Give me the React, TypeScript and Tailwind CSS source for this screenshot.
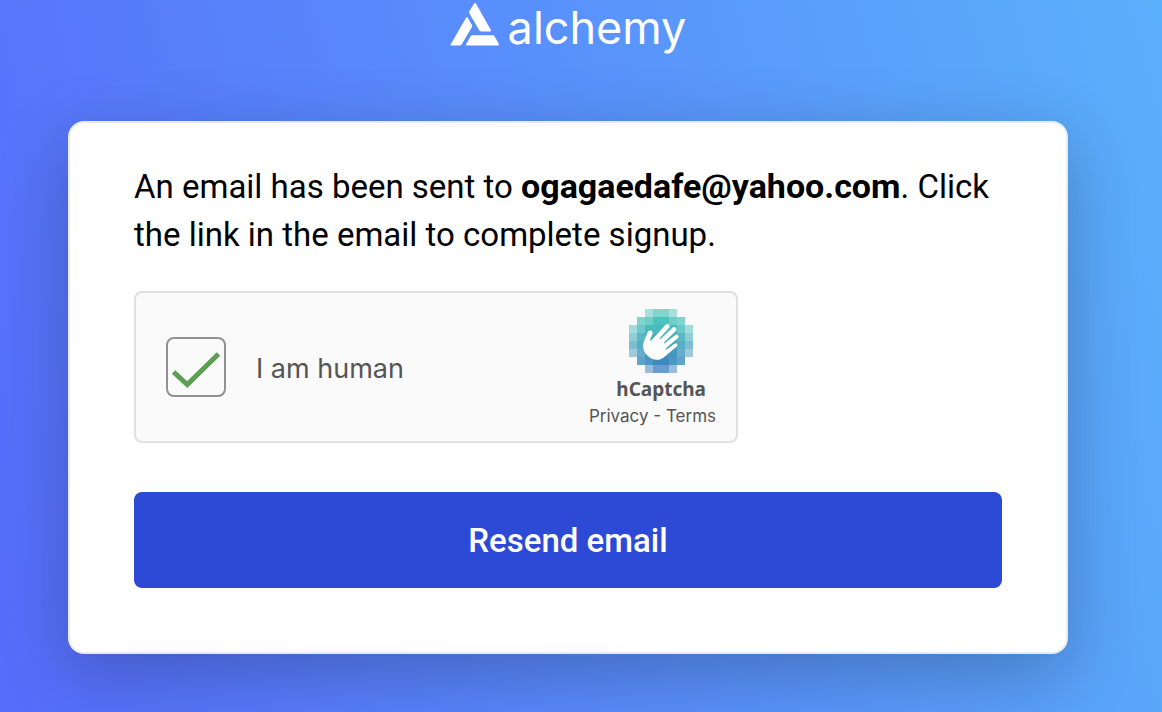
const PIXEL_ROWS = [
  { color: '#4cc8bb', alphas: [0, 0, 0.5, 0.7, 0.7, 0.5, 0, 0] },
  { color: '#4cc3bb', alphas: [0, 0.7, 0.8, 1, 1, 0.8, 0.7, 0] },
  { color: '#4abbbc', alphas: [0.5, 0.8, 1, 1, 1, 1, 0.8, 0.5] },
  { color: '#48b0bc', alphas: [0.6, 0.9, 1, 1, 1, 1, 0.9, 0.6] },
  { color: '#46a5bd', alphas: [0.7, 0.9, 1, 1, 1, 1, 0.9, 0.7] },
  { color: '#4299be', alphas: [0.5, 0.8, 1, 1, 1, 1, 0.8, 0.5] },
  { color: '#3d8bbe', alphas: [0, 0.8, 0.9, 1, 1, 0.9, 0.8, 0] },
  { color: '#3a7cc0', alphas: [0, 0, 0.5, 0.75, 0.75, 0.5, 0, 0] },
];

function AlchemyMark() {
  return (
    <svg viewBox="0 0 50 44" className="h-11 w-[50px]" fill="#fff" aria-hidden="true">
      <path d="M24.1 1.6 Q25 0.2 25.9 1.6 L41 28.2 Q41.3 29.4 40 29.4 L31 29.4 Q30 29.4 29.4 28.4 L19.2 11 Q18.8 10.2 19.2 9.4 Z" />
      <path d="M16.2 15.4 Q17 14.6 17.6 15.4 L22 23 Q22.4 24 22 25 L11.6 42.6 Q11.1 43.4 10.2 43.4 L1 43.4 Q0.2 43.2 0.6 42.4 Z" />
      <path d="M20.8 34 Q21.3 33.2 22.2 33.2 L42.8 33.2 Q43.8 33.2 44.3 34 L48.9 42 Q49.3 43.4 48.2 43.4 L17 43.4 Q15.6 43.4 16.1 42.2 Z" />
    </svg>
  );
}

function CaptchaMark() {
  return (
    <svg viewBox="0 0 32 32" className="size-16" shapeRendering="crispEdges" aria-hidden="true">
      {PIXEL_ROWS.map((row, y) =>
        row.alphas.map((alpha, x) =>
          alpha > 0 ? (
            <rect key={`${x}-${y}`} x={x * 4} y={y * 4} width="4" height="4" fill={row.color} fillOpacity={alpha} />
          ) : null,
        ),
      )}
      <path
        fill="#fff"
        shapeRendering="auto"
        transform="translate(-0.9 -0.6)"
        d="M11.3465 16.0186L12.4586 13.5326C12.8628 12.8925 12.8121 12.1091 12.3741 11.6711C12.3151 11.6122 12.2478 11.5617 12.172 11.5196C11.8773 11.3427 11.5151 11.309 11.1866 11.4101C10.8245 11.528 10.5128 11.7638 10.3107 12.0839C10.3107 12.0839 8.79459 15.6227 8.23026 17.2063C7.66593 18.7899 7.89335 21.6964 10.0579 23.8695C12.358 26.1696 15.6849 26.6919 17.8075 25.0993C17.9002 25.0572 17.9844 25.0067 18.0603 24.9393L24.604 19.4732C24.9241 19.2121 25.3958 18.6645 24.9746 18.0496C24.5619 17.4515 23.7869 17.8558 23.4669 18.058L19.7014 20.7961C19.6341 20.855 19.5246 20.8466 19.4656 20.7708L19.4572 20.7624C19.3477 20.6276 19.3308 20.2738 19.5077 20.1306L25.2778 15.2351C25.7748 14.7887 25.8421 14.1316 25.4379 13.6851C25.042 13.2471 24.4186 13.2555 23.9131 13.7104L18.7159 17.7717C18.6233 17.8474 18.48 17.8306 18.4042 17.738L18.3958 17.7295C18.2947 17.62 18.2526 17.4347 18.3705 17.3168L24.2585 11.6036C24.7219 11.174 24.7556 10.4495 24.3259 9.98618C24.1237 9.7587 23.8373 9.63235 23.534 9.63235C23.2223 9.63235 22.9275 9.75028 22.7001 9.96933L16.6859 15.6143C16.5427 15.7575 16.2647 15.6143 16.231 15.4458C16.2142 15.3869 16.231 15.3195 16.2731 15.2773L20.8728 10.0368C21.3361 9.6071 21.3614 8.89096 20.9402 8.42758C20.519 7.96419 19.7861 7.93892 19.3227 8.36016C19.2974 8.37701 19.2806 8.40228 19.2553 8.42756L12.2646 16.1619C12.0118 16.4146 11.6412 16.423 11.4643 16.2798C11.3548 16.1871 11.3295 16.0860 11.3465 16.0186Z"
      />
    </svg>
  );
}

function Captcha() {
  return (
    <div className="flex max-w-[604px] items-center justify-between rounded-lg border-2 border-[#e0e0e0] bg-[#fafafa] py-[14px] pr-5 pl-[30px] font-['Inter',sans-serif] text-[#555]">
      <div className="flex items-center">
        <span className="relative block size-[60px]">
          <input
            id="human"
            type="checkbox"
            defaultChecked
            className="peer block size-[60px] appearance-none rounded-lg border-2 border-[#919191] bg-[#fafafa]"
          />
          <svg
            viewBox="0 0 60 60"
            className="pointer-events-none absolute inset-0 hidden size-[60px] peer-checked:block"
            fill="none"
            stroke="#5c9f53"
            strokeWidth="5"
            aria-hidden="true"
          >
            <path d="M7.5 35 L21.3 47.5 L52.5 17" />
          </svg>
        </span>
        <label htmlFor="human" className="pt-1 pl-[30px] text-[27px] leading-9">
          I am human
        </label>
      </div>
      <div className="flex flex-col items-end pt-0.5">
        <div className="flex flex-col items-center pr-[10px]">
          <CaptchaMark />
          <div className="font-['Noto_Sans',sans-serif] text-[19px] leading-8 font-bold">hCaptcha</div>
        </div>
        <div className="text-[17px] leading-[22px]">
          <a href="#privacy">Privacy</a> - <a href="#terms">Terms</a>
        </div>
      </div>
    </div>
  );
}

export default function App() {
  return (
    <div className="min-h-screen bg-[linear-gradient(75deg,#566cfb,#5bb0fb)] pr-[94px] pb-[58px] pl-[68px] font-['Roboto',sans-serif]">
      <header className="flex items-start justify-center gap-2 pt-0.5 pb-[67px] text-white">
        <AlchemyMark />
        <span className="font-['Inter',sans-serif] text-[45px] leading-13">alchemy</span>
      </header>
      <main className="rounded-2xl border-2 border-[#e9eaf2] bg-white px-16 pt-10 pb-16 shadow-[0_20px_70px_rgba(0,0,0,0.24)]">
        <p className="text-[33px] leading-12 font-[450] text-black">
          An email has been sent to <strong className="text-[34px] leading-none font-bold">ogagaedafe@yahoo.com</strong>.
          Click the link in the email to complete signup.
        </p>
        <div className="pt-8 pb-[49px]">
          <Captcha />
        </div>
        <button type="button" className="h-24 w-full rounded-lg bg-[#2d4ad6] pt-0.5 text-[33px] font-medium text-white">
          Resend email
        </button>
      </main>
    </div>
  );
}
